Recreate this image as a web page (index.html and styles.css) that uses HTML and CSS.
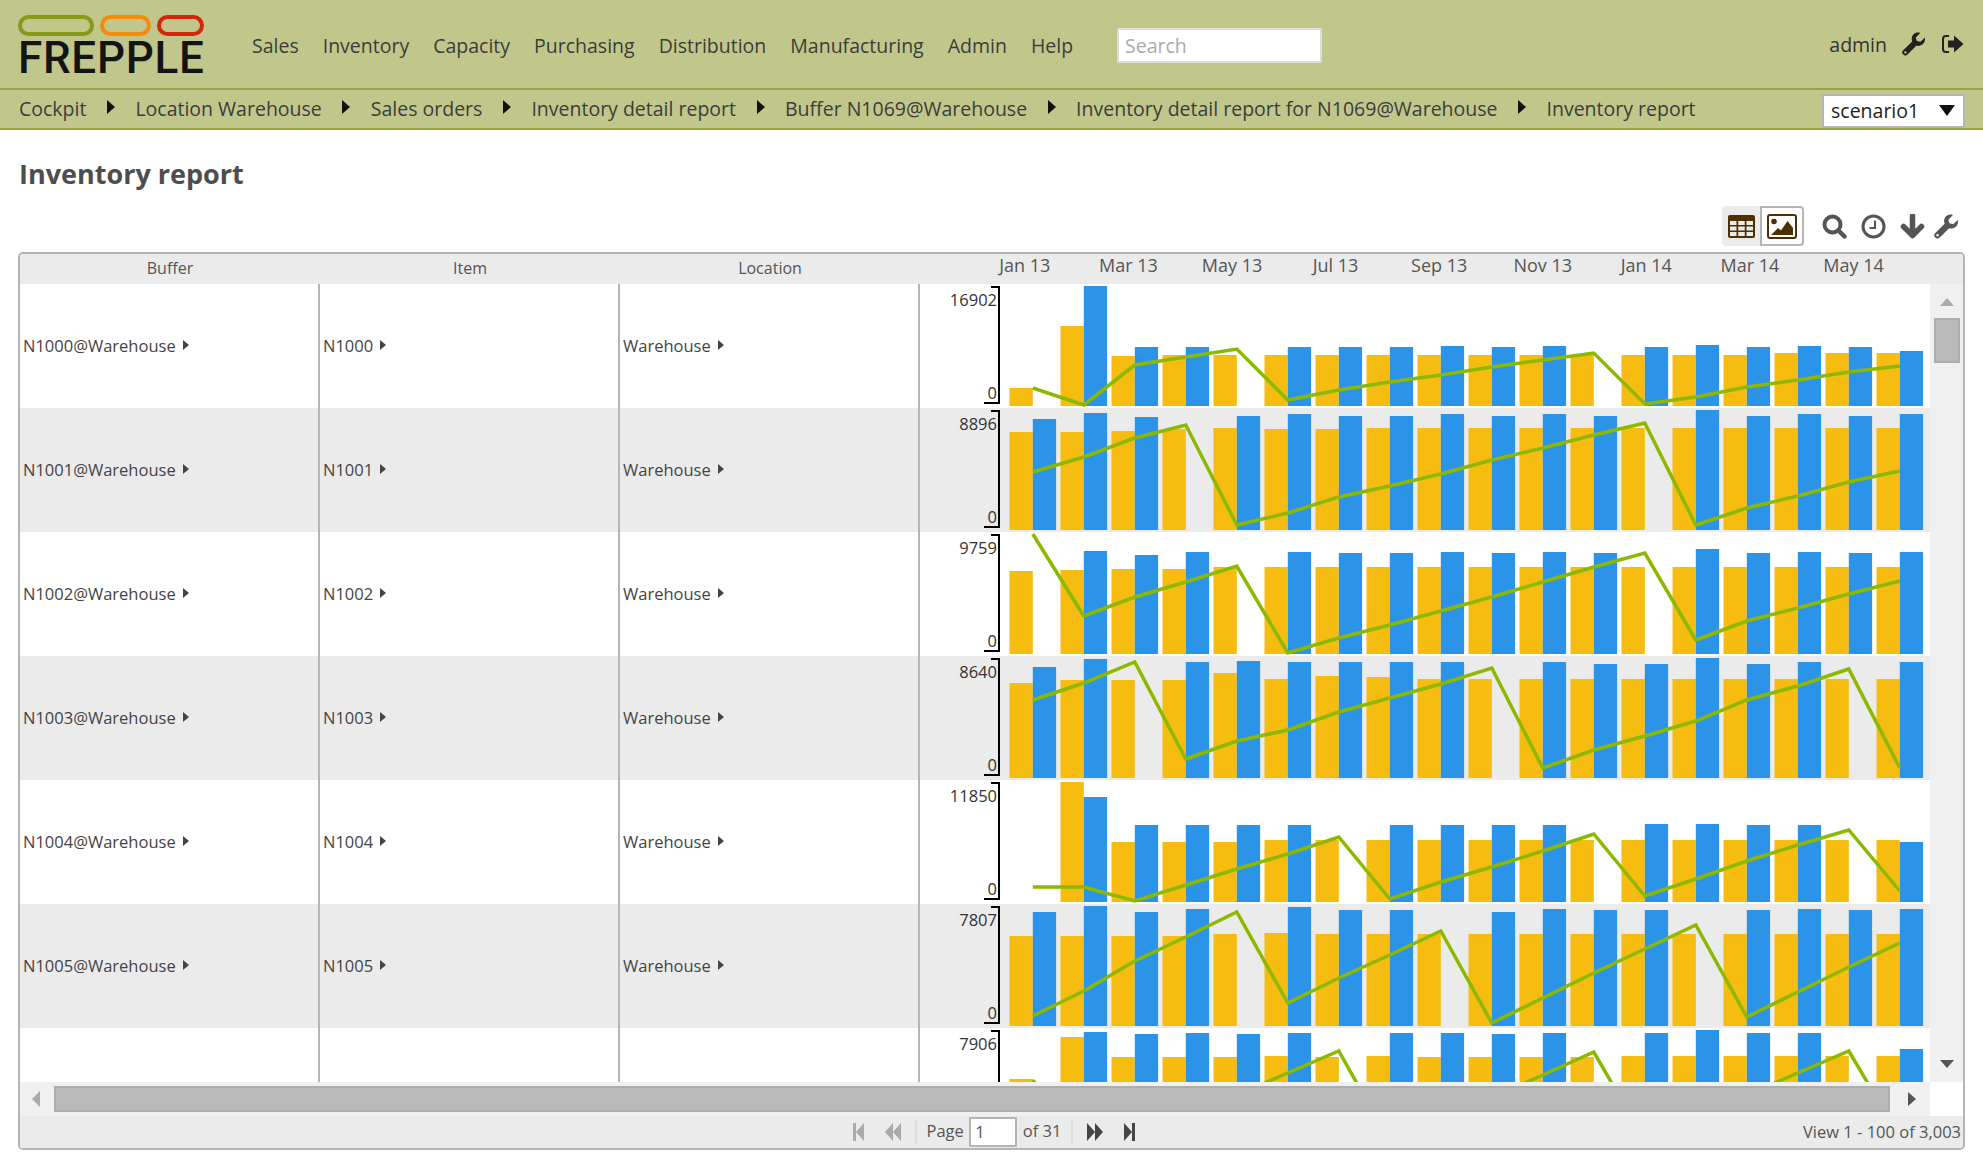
FILE: index.html
```html
<!DOCTYPE html>
<html lang="en">

<head>
    <meta charset="UTF-8">
    <meta name="viewport" content="width=device-width, initial-scale=1.0">
    <title>Inventory report</title>
    <link rel="stylesheet" href="styles.css">
</head>

<body>

    <div class="topbar">
        <div class="logo">
            <div class="logo-pills">
                <span class="pill pill-green"></span>
                <span class="pill pill-orange"></span>
                <span class="pill pill-red"></span>
            </div>
            <div class="logo-text">FREPPLE</div>
        </div>
        <div class="nav">
            <a>Sales</a>
            <a>Inventory</a>
            <a>Capacity</a>
            <a>Purchasing</a>
            <a>Distribution</a>
            <a>Manufacturing</a>
            <a>Admin</a>
            <a>Help</a>
        </div>
        <input class="search" type="text" placeholder="Search">
        <div class="user">
            <span class="user-name">admin</span>
            <svg class="user-wrench" viewBox="0 0 24 24"><path fill-rule="evenodd" d="M23 5.6l-4.6 4.2-3.6-.9-1-3.5L18.200.9C14 -.6 9.600 2.400 9.700 7c0 .9.200 1.700.5 2.400L1.200 18.300a3 3 0 0 0 4.300 4.300l9-9c3.900 1.300 8.500-1.700 8.500-6 0-.7-.1-1.300 0-2zM3.400 21.600a1.200 1.200 0 1 1 0-2.400 1.200 1.200 0 0 1 0 2.400z"/></svg>
            <svg class="user-exit" viewBox="0 0 22 20"><path class="exit-door" d="M7 2H4a3 3 0 0 0-3 3v10a3 3 0 0 0 3 3h3"/><path d="M6 6.500h6V1.500l9.500 8.500-9.500 8.500v-5H6z"/></svg>
        </div>
    </div>

    <div class="crumbs">
        <a>Cockpit</a><i class="crumb-arrow"></i>
        <a>Location Warehouse</a><i class="crumb-arrow"></i>
        <a>Sales orders</a><i class="crumb-arrow"></i>
        <a>Inventory detail report</a><i class="crumb-arrow"></i>
        <a>Buffer N1069@Warehouse</a><i class="crumb-arrow"></i>
        <a>Inventory detail report for N1069@Warehouse</a><i class="crumb-arrow"></i>
        <a>Inventory report</a>
        <div class="scenario">scenario1<i class="scenario-arrow"></i></div>
    </div>

    <div class="content">
        <h1 class="title">Inventory report</h1>

        <div class="toolbar">
            <div class="toggle">
                <div class="toggle-btn">
                    <svg class="icon-table" viewBox="0 0 27 23">
                        <rect width="27" height="23" rx="2" fill="#4d2f00"/>
                        <g fill="#ebebeb">
                            <rect x="2" y="6" width="6.500" height="4"/><rect x="10.250" y="6" width="6.500" height="4"/><rect x="18.500" y="6" width="6.500" height="4"/>
                            <rect x="2" y="11.500" width="6.500" height="4"/><rect x="10.250" y="11.500" width="6.500" height="4"/><rect x="18.500" y="11.500" width="6.500" height="4"/>
                            <rect x="2" y="17" width="6.500" height="4"/><rect x="10.250" y="17" width="6.500" height="4"/><rect x="18.500" y="17" width="6.500" height="4"/>
                        </g>
                    </svg>
                </div>
                <div class="toggle-btn toggle-active">
                    <svg class="icon-picture" viewBox="0 0 30 25">
                        <rect x="1" y="1" width="28" height="23" rx="2" fill="#fff" stroke="#4d2f00" stroke-width="2"/>
                        <circle cx="7" cy="7.500" r="2.800" fill="#4d2f00"/>
                        <path d="M4 21l7-7 3 2.500 6.500-9.500 5.500 7v7z" fill="#4d2f00"/>
                    </svg>
                </div>
            </div>
            <div class="tools">
                <svg class="tool" viewBox="0 0 25 25"><circle cx="10.500" cy="10.500" r="8" fill="none" stroke="#555" stroke-width="4"/><path d="M16.500 16.500l6 6" stroke="#555" stroke-width="4.500" stroke-linecap="round"/></svg>
                <svg class="tool" viewBox="0 0 25 25"><circle cx="12.500" cy="12.500" r="10.500" fill="none" stroke="#555" stroke-width="3"/><path d="M14 6.500v7.500H8.500" fill="none" stroke="#555" stroke-width="2"/></svg>
                <svg class="tool" viewBox="0 0 25 25"><path d="M12.500 2v19M3.500 12.500l9 9 9-9" fill="none" stroke="#555" stroke-width="5.500" stroke-linejoin="round" stroke-linecap="round"/></svg>
                <svg class="tool tool-wrench" viewBox="0 0 24 24"><path fill="#555" fill-rule="evenodd" d="M23 5.600l-4.600 4.200-3.600-.9-1-3.500L18.200.9C14 -.6 9.600 2.400 9.700 7c0 .9.200 1.700.5 2.400L1.200 18.300a3 3 0 0 0 4.300 4.300l9-9c3.900 1.300 8.500-1.700 8.500-6 0-.7-.1-1.300 0-2zM3.400 21.600a1.200 1.200 0 1 1 0-2.400 1.200 1.200 0 0 1 0 2.400z"/></svg>
            </div>
        </div>

        <div class="panel">
            <div class="grid-head">
                <div class="head-cell">Buffer</div>
                <div class="head-cell">Item</div>
                <div class="head-cell">Location</div>
                <div class="months">
                    <span>Jan 13</span><span>Mar 13</span><span>May 13</span><span>Jul 13</span><span>Sep 13</span><span>Nov 13</span><span>Jan 14</span><span>Mar 14</span><span>May 14</span>
                </div>
            </div>

            <div class="grid-middle">
                <div class="rows">
                    <div class="row">
                        <div class="cell">N1000@Warehouse<i class="cell-arrow"></i></div>
                        <div class="cell">N1000<i class="cell-arrow"></i></div>
                        <div class="cell">Warehouse<i class="cell-arrow"></i></div>
                        <svg class="chart"></svg>
                    </div>
                    <div class="row">
                        <div class="cell">N1001@Warehouse<i class="cell-arrow"></i></div>
                        <div class="cell">N1001<i class="cell-arrow"></i></div>
                        <div class="cell">Warehouse<i class="cell-arrow"></i></div>
                        <svg class="chart"></svg>
                    </div>
                    <div class="row">
                        <div class="cell">N1002@Warehouse<i class="cell-arrow"></i></div>
                        <div class="cell">N1002<i class="cell-arrow"></i></div>
                        <div class="cell">Warehouse<i class="cell-arrow"></i></div>
                        <svg class="chart"></svg>
                    </div>
                    <div class="row">
                        <div class="cell">N1003@Warehouse<i class="cell-arrow"></i></div>
                        <div class="cell">N1003<i class="cell-arrow"></i></div>
                        <div class="cell">Warehouse<i class="cell-arrow"></i></div>
                        <svg class="chart"></svg>
                    </div>
                    <div class="row">
                        <div class="cell">N1004@Warehouse<i class="cell-arrow"></i></div>
                        <div class="cell">N1004<i class="cell-arrow"></i></div>
                        <div class="cell">Warehouse<i class="cell-arrow"></i></div>
                        <svg class="chart"></svg>
                    </div>
                    <div class="row">
                        <div class="cell">N1005@Warehouse<i class="cell-arrow"></i></div>
                        <div class="cell">N1005<i class="cell-arrow"></i></div>
                        <div class="cell">Warehouse<i class="cell-arrow"></i></div>
                        <svg class="chart"></svg>
                    </div>
                    <div class="row">
                        <div class="cell"></div>
                        <div class="cell"></div>
                        <div class="cell"></div>
                        <svg class="chart"></svg>
                    </div>
                </div>
                <div class="vscroll">
                    <i class="arrow-up"></i>
                    <div class="vscroll-thumb"></div>
                    <i class="arrow-down"></i>
                </div>
            </div>

            <div class="hscroll">
                <i class="arrow-left"></i>
                <div class="hscroll-thumb"></div>
                <i class="arrow-right"></i>
            </div>

            <div class="pager">
                <div class="pager-center">
                    <svg class="pg-btn pg-off" viewBox="0 0 11 18"><path d="M0 0h3v18H0zM11 0v18L3 9z"/></svg>
                    <svg class="pg-btn pg-off pg-wide" viewBox="0 0 16 18"><path d="M8 0v18L0 9zM16 0v18L8 9z"/></svg>
                    <i class="pg-sep"></i>
                    <span class="pg-text">Page</span>
                    <div class="pg-input">1</div>
                    <span class="pg-text pg-of">of 31</span>
                    <i class="pg-sep"></i>
                    <svg class="pg-btn pg-wide" viewBox="0 0 16 18"><path d="M0 0l8 9-8 9zM8 0l8 9-8 9z"/></svg>
                    <svg class="pg-btn" viewBox="0 0 11 18"><path d="M0 0l8 9-8 9zM8 0h3v18H8z"/></svg>
                </div>
                <div class="pager-view">View 1 - 100 of 3,003</div>
            </div>
        </div>
    </div>

    <script src="charts.js"></script>

</body>

</html>
```

FILE: styles.css
```css
body {
    font-family: "Open Sans", Arial, sans-serif;
    background-color: #ffffff;
    color: #444;
    margin: 0;
    height: 1174px;
    overflow: hidden;
}

/* top menu */
.topbar {
    display: flex;
    align-items: center;
    height: 88px;
    padding: 0 19px 0 18px;
    background-color: #c1c78a;
    border-bottom: 2px solid #9aa53f;
}

.logo {
    width: 186px;
    margin-top: 4px;
}

.logo-pills {
    display: flex;
    gap: 6px;
    height: 21px;
}

.pill {
    box-sizing: border-box;
    border: 4px solid;
    border-radius: 11px;
}

.pill-green {
    width: 76px;
    border-color: #87981a;
}

.pill-orange {
    width: 51px;
    border-color: #f58a0c;
}

.pill-red {
    width: 47px;
    border-color: #d4260a;
}

.logo-text {
    margin-top: 3px;
    font-family: "Roboto", sans-serif;
    font-weight: 500;
    font-size: 44px;
    line-height: 38px;
    letter-spacing: 0.7px;
    color: #141414;
    white-space: nowrap;
}

.nav {
    display: flex;
    gap: 24px;
    margin: 3px 0 0 48px;
    font-size: 19.5px;
    color: #3c3c3c;
}

.search {
    width: 205px;
    height: 35px;
    box-sizing: border-box;
    margin: 3px 0 0 44px;
    padding: 0 6px;
    border: 2px solid #dcdcdc;
    border-radius: 2px;
    font-family: inherit;
    font-size: 19.5px;
}

.search::placeholder {
    color: #aaa;
}

.user {
    display: flex;
    align-items: center;
    margin-left: auto;
    color: #333;
    font-size: 19.5px;
}

.user-wrench {
    width: 24px;
    height: 24px;
    margin-left: 15px;
    fill: #222;
}

.user-exit {
    width: 22px;
    height: 20px;
    margin-left: 16px;
    fill: #222;
}

.exit-door {
    fill: none;
    stroke: #222;
    stroke-width: 2;
}

/* breadcrumbs */
.crumbs {
    display: flex;
    align-items: center;
    box-sizing: border-box;
    height: 40px;
    padding: 0 18px 2px 19px;
    background-color: #c1c78a;
    border-bottom: 2px solid #9aa53f;
    font-size: 19.5px;
    color: #3c3c3c;
}

.crumb-arrow {
    width: 0;
    height: 0;
    margin: -2px 20.5px 0;
    border-top: 7px solid transparent;
    border-bottom: 7px solid transparent;
    border-left: 8px solid #111;
}

.scenario {
    display: flex;
    align-items: center;
    justify-content: space-between;
    box-sizing: border-box;
    width: 143px;
    height: 34px;
    margin: 6px 0 0 auto;
    padding: 0 7px 2px 7px;
    background-color: #fff;
    border: 2px solid #b5b5b5;
    color: #222;
}

.scenario-arrow {
    width: 0;
    height: 0;
    margin-right: 1px;
    border-left: 8px solid transparent;
    border-right: 8px solid transparent;
    border-top: 11px solid #111;
}

/* page body */
.content {
    padding: 0 18px;
}

.title {
    margin: 0;
    height: 74px;
    padding-left: 1px;
    font-size: 27px;
    line-height: 87px;
    font-weight: 700;
    color: #4d4d4d;
}

.toolbar {
    display: flex;
    justify-content: flex-end;
    align-items: center;
    height: 48px;
    padding-right: 6px;
}

.toggle {
    display: flex;
    height: 40px;
    margin-top: -4px;
    border-radius: 4px;
}

.toggle-btn {
    display: flex;
    align-items: center;
    justify-content: center;
    box-sizing: border-box;
    width: 38px;
    background-color: #ebebeb;
    border-radius: 4px 0 0 4px;
}

.toggle-active {
    width: 44px;
    background-color: #fff;
    border: 2px solid #b5b5b5;
    border-radius: 0 4px 4px 0;
}

.icon-table {
    width: 27px;
    height: 23px;
}

.icon-picture {
    width: 30px;
    height: 25px;
}

.tools {
    display: flex;
    gap: 14px;
    margin: -4px 0 0 18px;
}

.tool {
    width: 25px;
    height: 25px;
}

.tool-wrench {
    margin-left: -5px;
}

/* grid */
.panel {
    width: 1947px;
    height: 898px;
    box-sizing: border-box;
    border: 2px solid #b5b5b5;
    border-radius: 5px;
    overflow: hidden;
}

.grid-head {
    display: flex;
    height: 30px;
    background-color: #ebebeb;
    color: #555;
}

.head-cell {
    width: 300px;
    font-size: 16px;
    line-height: 28px;
    text-align: center;
}

.months {
    display: grid;
    grid-template-columns: repeat(9, 103.6px);
    margin-left: 53px;
    font-size: 18px;
    line-height: 22px;
    text-align: center;
    white-space: nowrap;
}

.grid-middle {
    display: flex;
    height: 798px;
}

.rows {
    width: 1910px;
    overflow: hidden;
}

.row {
    display: flex;
    height: 124px;
}

.row:nth-child(even) {
    background-color: #ebebeb;
}

.cell {
    display: flex;
    align-items: center;
    box-sizing: border-box;
    width: 300px;
    padding: 0 0 2px 3px;
    border-right: 2px solid #b5b5b5;
    font-size: 16.5px;
    color: #444;
}

.cell-arrow {
    width: 0;
    height: 0;
    margin-left: 7px;
    border-top: 5px solid transparent;
    border-bottom: 5px solid transparent;
    border-left: 6px solid #444;
}

.chart {
    display: block;
    width: 1010px;
    height: 124px;
    font-size: 16.5px;
}

.chart-label {
    fill: #333;
    text-anchor: end;
}

.chart-axis {
    fill: none;
    stroke: #000;
    stroke-width: 2;
}

.bar-stock {
    fill: #f6bc0f;
}

.bar-flow {
    fill: #2c94e8;
}

.chart-line {
    fill: none;
    stroke: #8cb900;
    stroke-width: 3.5;
}

/* scrollbars */
.vscroll {
    display: flex;
    flex-direction: column;
    align-items: center;
    width: 33px;
    background-color: #f0f0f0;
}

.arrow-up {
    width: 0;
    height: 0;
    margin-top: 14px;
    border-left: 7px solid transparent;
    border-right: 7px solid transparent;
    border-bottom: 8px solid #aaa;
}

.vscroll-thumb {
    box-sizing: border-box;
    width: 26px;
    height: 45px;
    margin-top: 12px;
    background-color: #bababa;
    border: 2px solid #adadad;
}

.arrow-down {
    width: 0;
    height: 0;
    margin-top: auto;
    margin-bottom: 14px;
    border-left: 7px solid transparent;
    border-right: 7px solid transparent;
    border-top: 8px solid #555;
}

.hscroll {
    display: flex;
    align-items: center;
    width: 1910px;
    height: 34px;
    background-color: #f0f0f0;
}

.arrow-left {
    width: 0;
    height: 0;
    margin-left: 12px;
    border-top: 8px solid transparent;
    border-bottom: 8px solid transparent;
    border-right: 8px solid #aaa;
}

.hscroll-thumb {
    box-sizing: border-box;
    width: 1836px;
    height: 26px;
    margin-left: 14px;
    background-color: #bababa;
    border: 2px solid #adadad;
}

.arrow-right {
    width: 0;
    height: 0;
    margin-left: 18px;
    border-top: 7px solid transparent;
    border-bottom: 7px solid transparent;
    border-left: 8px solid #555;
}

/* pager */
.pager {
    display: flex;
    align-items: center;
    justify-content: space-between;
    height: 32px;
    padding-right: 2px;
    background-color: #ebebeb;
    font-size: 16.5px;
    color: #555;
}

.pager-center {
    display: flex;
    align-items: center;
    margin-left: 822px;
}

.pager-view {
    margin-top: -2px;
}

.pg-btn {
    width: 11px;
    height: 18px;
    margin: 0 10.5px;
    fill: #444;
}

.pg-wide {
    width: 16px;
}

.pg-off {
    fill: #aaa;
}

.pg-sep {
    width: 2px;
    height: 24px;
    margin: 0 3.5px;
    background-color: #ddd;
}

.pg-text {
    margin: -3px 6.5px 0;
}

.pg-of {
    margin-right: 6.5px;
}

.pg-input {
    box-sizing: border-box;
    width: 48px;
    height: 30px;
    margin: 0 -1px;
    padding-left: 4px;
    background-color: #fff;
    border: 2px solid #b5b5b5;
    line-height: 26px;
}
```

FILE: charts.js
```js
// bar and line heights are in pixels above the baseline of each chart
const charts = [
    {
        max: '16902',
        zero: true,
        stock: [18, 80, 50, 51, 51, 51, 51, 51, 51, 51, 51, 51, 51, 51, 51, 53, 53, 53],
        flow: [0, 120, 59, 59, 0, 59, 59, 59, 60, 59, 60, 0, 59, 61, 59, 60, 59, 55],
        line: [18, 1, 41, 49, 57, 6, 16, 24, 31, 39, 46, 53, 2, 9, 19, 26, 34, 40]
    },
    {
        max: '8896',
        zero: true,
        stock: [98, 98, 99, 101, 102, 101, 101, 102, 102, 102, 102, 102, 102, 102, 102, 102, 102, 102],
        flow: [111, 117, 113, 0, 114, 116, 114, 114, 116, 114, 116, 114, 0, 120, 114, 116, 114, 116],
        line: [58, 73, 92, 105, 5, 17, 33, 44, 56, 70, 82, 95, 107, 5, 22, 34, 48, 59]
    },
    {
        max: '9759',
        zero: true,
        stock: [83, 84, 85, 85, 87, 87, 87, 87, 87, 87, 87, 87, 87, 87, 87, 87, 87, 87],
        flow: [0, 103, 99, 102, 0, 102, 101, 101, 102, 101, 102, 101, 0, 105, 101, 102, 101, 102],
        line: [120, 38, 57, 72, 88, 1, 16, 29, 43, 57, 72, 87, 101, 14, 33, 46, 60, 73]
    },
    {
        max: '8640',
        zero: true,
        stock: [95, 98, 98, 98, 105, 99, 102, 101, 99, 99, 99, 99, 99, 99, 99, 99, 99, 99],
        flow: [111, 119, 0, 116, 117, 116, 116, 116, 116, 0, 116, 114, 114, 120, 114, 116, 0, 116],
        line: [78, 95, 116, 19, 37, 48, 66, 80, 94, 110, 10, 28, 42, 57, 78, 92, 109, 10]
    },
    {
        max: '11850',
        zero: true,
        stock: [0, 120, 60, 60, 60, 62, 62, 62, 62, 62, 62, 62, 62, 62, 62, 62, 62, 62],
        flow: [0, 105, 77, 77, 77, 77, 0, 77, 77, 77, 77, 0, 78, 78, 77, 77, 0, 60],
        line: [15, 15, 1, 17, 33, 48, 65, 3, 20, 35, 51, 68, 6, 23, 41, 57, 72, 11]
    },
    {
        max: '7807',
        zero: true,
        stock: [90, 90, 90, 90, 92, 93, 92, 92, 92, 92, 92, 92, 92, 92, 92, 92, 92, 92],
        flow: [114, 120, 114, 117, 0, 119, 116, 116, 0, 114, 117, 116, 116, 0, 116, 117, 116, 117],
        line: [10, 35, 65, 89, 114, 23, 48, 71, 95, 3, 28, 53, 77, 101, 9, 34, 59, 83]
    },
    {
        // last row is scrolled out of view below the bars, so no zero label
        max: '7906',
        zero: false,
        stock: [71, 113, 93, 93, 93, 94, 93, 94, 93, 93, 93, 93, 94, 94, 94, 94, 94, 94],
        flow: [0, 118, 116, 117, 116, 117, 0, 117, 117, 116, 117, 0, 117, 120, 117, 117, 0, 101],
        line: [70, 2, 11, 33, 55, 77, 99, 8, 30, 52, 75, 98, 10, 33, 55, 77, 99, 13]
    }
];

const SVG_NS = 'http://www.w3.org/2000/svg';
const BASE = 122;
const START = 89.5;
const PITCH = 51;
const BAR = 23.3;

function add(svg, tag, attrs, text) {
    const el = document.createElementNS(SVG_NS, tag);
    for (const key in attrs) {
        el.setAttribute(key, attrs[key]);
    }
    if (text) {
        el.textContent = text;
    }
    svg.appendChild(el);
}

function drawBar(svg, cls, x, h) {
    if (h > 0) {
        add(svg, 'rect', { class: cls, x: x, y: BASE - h, width: BAR, height: h });
    }
}

document.querySelectorAll('.chart').forEach((svg, n) => {
    const data = charts[n];
    svg.setAttribute('viewBox', '0 0 1010 124');

    add(svg, 'text', { class: 'chart-label', x: 77, y: 22 }, data.max);
    if (data.zero) {
        add(svg, 'text', { class: 'chart-label', x: 77, y: 115 }, '0');
    }
    add(svg, 'path', { class: 'chart-axis', d: 'M71 3H79V119H64' });

    let points = [];
    for (let i = 0; i < 18; i++) {
        const x = START + i * PITCH;
        drawBar(svg, 'bar-stock', x, data.stock[i]);
        drawBar(svg, 'bar-flow', x + BAR, data.flow[i]);
        points.push((x + BAR) + ',' + (BASE - data.line[i]));
    }
    add(svg, 'polyline', { class: 'chart-line', points: points.join(' ') });
});
```
